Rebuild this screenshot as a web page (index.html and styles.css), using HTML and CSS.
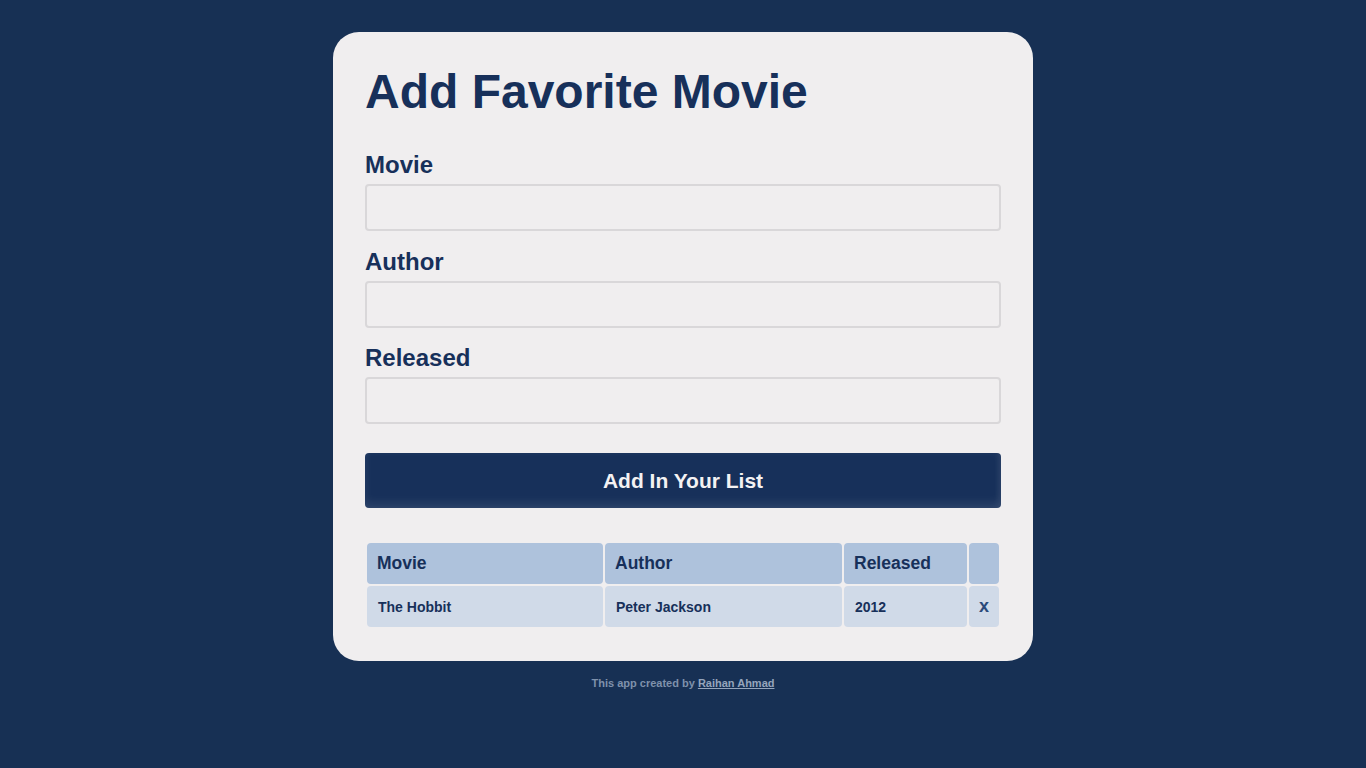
FILE: index.html
```html
<!DOCTYPE html>
<html lang="en">
<head>
<meta charset="utf-8">
<title>Add Favorite Movie</title>
<link rel="stylesheet" href="styles.css">
</head>
<body>
<main class="card">
  <h1 class="title">Add Favorite Movie</h1>
  <form class="form">
    <div class="field">
      <label class="label" for="movie">Movie</label>
      <input class="input" id="movie" type="text">
    </div>
    <div class="field">
      <label class="label" for="author">Author</label>
      <input class="input" id="author" type="text">
    </div>
    <div class="field">
      <label class="label" for="released">Released</label>
      <input class="input" id="released" type="text">
    </div>
    <button class="btn" type="button">Add In Your List</button>
  </form>
  <table class="list">
    <colgroup>
      <col class="c1"><col class="c2"><col class="c3"><col class="c4">
    </colgroup>
    <thead>
      <tr><th>Movie</th><th>Author</th><th>Released</th><th></th></tr>
    </thead>
    <tbody>
      <tr><td>The Hobbit</td><td>Peter Jackson</td><td>2012</td><td class="del">x</td></tr>
    </tbody>
  </table>
</main>
<footer class="foot">This app created by <a href="#" class="foot-link">Raihan Ahmad</a></footer>
</body>
</html>
```
FILE: styles.css
```css
* { box-sizing: border-box; }
html, body { margin: 0; padding: 0; }
body {
  background: #173054;
  font-family: "Liberation Sans", Arial, sans-serif;
  color: #17305a;
  padding-top: 32px;
}
.card {
  width: 700px;
  margin: 0 auto;
  background: #f0eeef;
  border-radius: 26px;
  padding: 32px;
}
.title {
  margin: 0;
  font-size: 48px;
  font-weight: 700;
  line-height: 55px;
  color: #17305a;
}
.form {
  display: flex;
  flex-direction: column;
  margin-top: 33px;
}
.field {
  display: flex;
  flex-direction: column;
  gap: 6px;
  margin-bottom: 17.5px;
}
.field:last-of-type { margin-bottom: 29px; }
.label {
  font-size: 24px;
  font-weight: 700;
  line-height: 26px;
  color: #17305a;
}
.input {
  height: 47px;
  border: 2px solid #d9d7d9;
  border-radius: 4px;
  background: transparent;
  font: inherit;
  padding: 0 10px;
}
.btn {
  height: 55px;
  border: none;
  border-radius: 4px;
  background: #17305a;
  color: #f4f2f3;
  font-family: "Liberation Sans", Arial, sans-serif;
  font-size: 21px;
  font-weight: 700;
  box-shadow: inset 0 -6px 8px rgba(255,255,255,0.08), inset -3px 0 6px rgba(255,255,255,0.05);
  cursor: pointer;
}
.list {
  width: 100%;
  margin-top: 33px;
  table-layout: fixed;
  border-collapse: separate;
  border-spacing: 2px;
}
.c1 { width: 236px; }
.c2 { width: 237px; }
.c3 { width: 123px; }
.c4 { width: 30px; }
.list th, .list td {
  height: 41px;
  border-radius: 4px;
  text-align: left;
  padding: 0 10px;
  color: #17305a;
  font-weight: 700;
}
.list th {
  background: #aec2dc;
  font-size: 17.5px;
}
.list td {
  background: #d0dae8;
  font-size: 14px;
  padding-left: 11px;
}
.list td.del {
  text-align: center;
  padding: 0;
  font-size: 18px;
  color: #2a4a7a;
}
.foot {
  text-align: center;
  margin-top: 16px;
  font-size: 11px;
  font-weight: 700;
  color: #7f91ab;
}
.foot-link { color: #95a5bc; }
```
